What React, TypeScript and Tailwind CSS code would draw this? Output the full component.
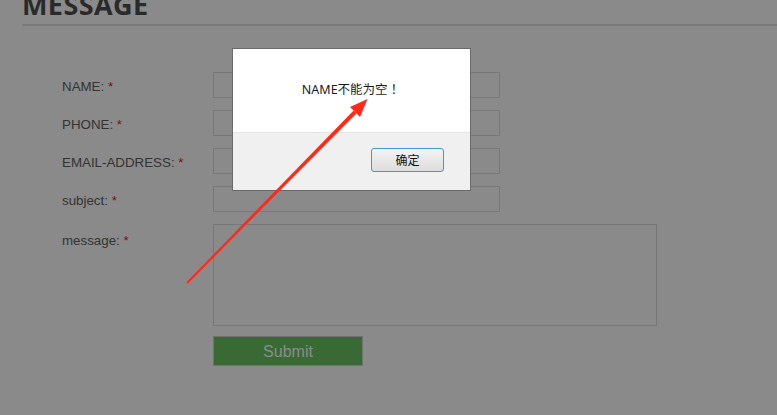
import React from 'react';

const fields = ['NAME', 'PHONE', 'EMAIL-ADDRESS', 'subject'];

export default function App() {
  return (
    <div className="relative w-[777px] h-[415px] overflow-hidden bg-[#8a8a8a]" style={{ fontFamily: '"Liberation Sans", Arial, sans-serif' }}>
      {/* page under the mask */}
      <div className="pl-[22px] -mt-[11px]">
        <h1 className="text-[27px] leading-[32px] font-bold text-[#2a2a2a] tracking-[0.4px]" style={{ fontFamily: '"Open Sans", sans-serif' }}>
          MESSAGE
        </h1>
        <div className="mt-[3px] h-[2px] bg-[#7b7b7b]" />
      </div>

      <div className="mt-[46px] pl-[62px] flex flex-col gap-[12px]">
        {fields.map(f => (
          <div key={f} className="flex items-center h-[26px]">
            <div className="w-[151px] text-[13.33px] text-[#333] mt-[3px]">
              {f}: <span className="text-[#7a1010]">*</span>
            </div>
            <div className="w-[287px] h-[26px] border border-[#777]" />
          </div>
        ))}
        <div className="flex items-start">
          <div className="w-[151px] text-[13.33px] text-[#333] mt-[7px]">
            message: <span className="text-[#7a1010]">*</span>
          </div>
          <div className="w-[444px] h-[102px] border border-[#777]" />
        </div>
        <div className="flex pl-[151px] -mt-[2px]">
          <div className="w-[150px] h-[30px] bg-[#3a6a34] border border-[#707070] flex items-center justify-center text-[16px] text-[#8c8c8c] pt-[2px]">
            Submit
          </div>
        </div>
      </div>

      {/* alert dialog */}
      <div className="absolute left-[232px] top-[48px] w-[239px] h-[143px] border border-[#6a6a6a] bg-[#f0f0f0] flex flex-col">
        <div className="h-[84px] bg-white border-b border-[#e4e4e4] flex items-center justify-center text-[12.5px] text-[#1a1a1a]" style={{ fontFamily: '"Noto Sans", "Noto Sans CJK SC", sans-serif' }}>
          <span className="mt-[-1px] pl-[2px]">
            NAME不能为空<span className="ml-[3px]" style={{ fontFamily: '"Noto Sans CJK SC", sans-serif' }}>！</span>
          </span>
        </div>
        <div className="flex justify-end pr-[26px] pt-[15px]">
          <div className="w-[73px] h-[24px] rounded-[3px] border border-[#3d9ad4] bg-gradient-to-b from-[#f4f4f4] to-[#dcdcdc] flex items-center justify-center text-[12px] text-[#111]" style={{ fontFamily: '"Noto Sans CJK SC", sans-serif' }}>
            确定
          </div>
        </div>
      </div>

      {/* red annotation arrow */}
      <svg className="absolute left-0 top-0" width="777" height="415">
        <polygon points="186.3,282.3 187.7,283.7 356.4,113.4 353.6,110.6" fill="#ff2a1a" />
        <polygon points="367.5,99 350,107 360,117" fill="#ff2a1a" />
      </svg>
    </div>
  );
}
